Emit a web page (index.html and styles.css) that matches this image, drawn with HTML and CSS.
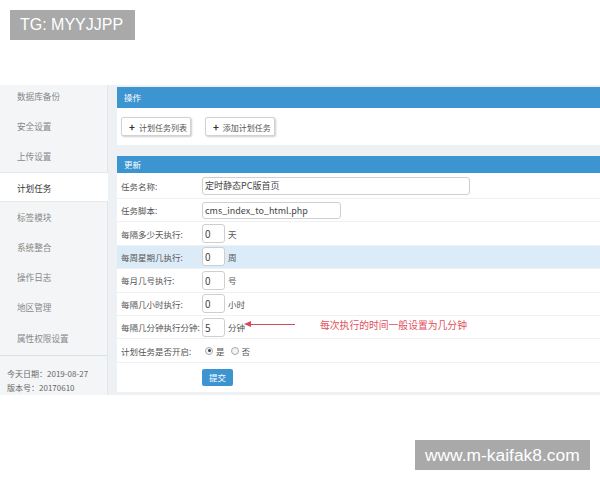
FILE: index.html
```html
<!DOCTYPE html>
<html>
  <head>
    <title>计划任务</title>
    <link rel="stylesheet" href="styles.css">
  </head>

  <body>
    <div class="tag tag-top">TG: MYYJJPP</div>

    <div class="screen">
      <!-- Sidebar -->
      <div class="sidebar">
        <ul class="menu">
          <li>数据库备份</li>
          <li>安全设置</li>
          <li>上传设置</li>
          <li class="active">计划任务</li>
          <li>标签模块</li>
          <li>系统整合</li>
          <li>操作日志</li>
          <li>地区管理</li>
          <li>属性权限设置</li>
        </ul>
        <div class="info">
          <p>今天日期：2019-08-27</p>
          <p>版本号：20170610</p>
        </div>
      </div>

      <!-- Main -->
      <div class="main">
        <div class="panel">
          <div class="panel-head tall">操作</div>
          <div class="panel-body actions">
            <button class="btn"><b>+</b>计划任务列表</button>
            <button class="btn"><b>+</b>添加计划任务</button>
          </div>
        </div>

        <div class="panel">
          <div class="panel-head">更新</div>
          <div class="form">
            <div class="row first">
              <span class="label">任务名称:</span>
              <input class="field wide" value="定时静态PC版首页">
            </div>
            <div class="row">
              <span class="label">任务脚本:</span>
              <input class="field mid" value="cms_index_to_html.php">
            </div>
            <div class="row">
              <span class="label">每隔多少天执行:</span>
              <input class="field small" value="0"><span class="unit">天</span>
            </div>
            <div class="row hl">
              <span class="label">每周星期几执行:</span>
              <input class="field small" value="0"><span class="unit">周</span>
            </div>
            <div class="row">
              <span class="label">每月几号执行:</span>
              <input class="field small" value="0"><span class="unit">号</span>
            </div>
            <div class="row">
              <span class="label">每隔几小时执行:</span>
              <input class="field small" value="0"><span class="unit">小时</span>
            </div>
            <div class="row">
              <span class="label">每隔几分钟执行分钟:</span>
              <input class="field small" value="5"><span class="unit">分钟</span>
              <div class="note">
                <span class="arrow"></span>
                <span class="note-text">每次执行的时间一般设置为几分钟</span>
              </div>
            </div>
            <div class="row">
              <span class="label">计划任务是否开启:</span>
              <span class="radio on"></span><span class="opt">是</span>
              <span class="radio"></span><span class="opt">否</span>
            </div>
            <div class="row submit-row">
              <span class="label"></span>
              <button class="submit">提交</button>
            </div>
          </div>
        </div>
      </div>
    </div>

    <div class="tag tag-bottom">www.m-kaifak8.com</div>
  </body>
</html>
```

FILE: styles.css
```css
* {
  margin: 0;
  padding: 0;
  box-sizing: border-box;
  font-family: 'Noto Sans CJK SC', 'Liberation Sans', sans-serif;
}

body {
  background: #fff;
  width: 600px;
  overflow: hidden;
}

.tag {
  display: inline-block;
  background: #a9a9a9;
  color: #fff;
  font-family: 'Liberation Sans', sans-serif;
  font-size: 16px;
  height: 30px;
  line-height: 30px;
}

.tag-top {
  margin: 10px 0 0 10px;
  width: 125px;
  padding-left: 10px;
}

.tag-bottom {
  display: block;
  margin: 45px 0 0 415px;
  width: 175px;
  padding-left: 10px;
  font-size: 17.4px;
}

.screen {
  display: flex;
  margin-top: 45px;
  height: 310px;
  overflow: hidden;
  background: #eef1f4;
}

/* Sidebar */
.sidebar {
  width: 108px;
  background: #f3f5f6;
  border-right: 1px solid #e3e6e9;
  flex-shrink: 0;
}

.menu {
  list-style: none;
  margin-top: -4px;
}

.menu li {
  height: 30.2px;
  line-height: 30px;
  padding-left: 17px;
  font-size: 8.6px;
  color: #888;
}

.menu li.active {
  background: #fff;
  color: #333;
  border-top: 1px solid #e6e8ea;
  border-bottom: 1px solid #e6e8ea;
  margin-right: -1px;
}

.info {
  border-top: 1px solid #dde1e4;
  margin-top: 2px;
  padding: 11px 0 0 7px;
}

.info p {
  font-size: 8px;
  color: #666;
  line-height: 14px;
}

/* Main */
.main {
  flex: 1;
  padding: 2px 0 0 9px;
}

.panel {
  background: #fff;
  margin-bottom: 11px;
}

.panel-head {
  background: #3c94d1;
  color: #fff;
  font-size: 8.5px;
  height: 17px;
  line-height: 17px;
  padding-left: 7px;
}

.panel-head.tall {
  height: 21px;
  line-height: 21px;
}

.actions {
  height: 37px;
  display: flex;
  align-items: center;
  gap: 14px;
  padding-left: 4px;
}

.btn {
  height: 19px;
  padding: 0 3px 0 7px;
  background: #fff;
  border: 1px solid #d2d2d2;
  border-radius: 2px;
  box-shadow: 1px 1px 2px rgba(0, 0, 0, 0.2);
  font-size: 8px;
  color: #555;
}

.btn b {
  margin-right: 4px;
  font-size: 10px;
  color: #333;
}

/* Form */
.row {
  display: flex;
  align-items: center;
  height: 23.4px;
  border-bottom: 1px solid #f0f1f2;
  position: relative;
}

.row.first {
  height: 26px;
}

.row.hl {
  background: #dcebf8;
}

.label {
  width: 85px;
  padding-left: 4px;
  font-size: 8.5px;
  color: #555;
  flex-shrink: 0;
}

.field {
  height: 18px;
  border: 1px solid #cfcfcf;
  border-radius: 3px;
  background: #fff;
  font-size: 9px;
  color: #444;
  padding-left: 2px;
}

.field.wide {
  width: 268px;
}

.field.mid {
  width: 139px;
  height: 17px;
}

.field.small {
  width: 23px;
  height: 19px;
  font-size: 10px;
}

.unit {
  margin-left: 3px;
  font-size: 8.5px;
  color: #555;
}

.note {
  position: absolute;
  left: 129px;
  top: 2px;
  display: flex;
  align-items: center;
}

.arrow {
  position: relative;
  width: 49px;
  height: 1px;
  background: #d9485a;
}

.arrow::before {
  content: "";
  position: absolute;
  left: -2px;
  top: -3px;
  border-right: 7px solid #d9485a;
  border-top: 3.5px solid transparent;
  border-bottom: 3.5px solid transparent;
}

.note-text {
  margin-left: 25px;
  font-size: 9.8px;
  color: #e0505e;
}

.radio {
  width: 8px;
  height: 8px;
  border-radius: 50%;
  border: 1px solid #aaa;
  background: #f4f4f4;
  margin-left: 3px;
  position: relative;
}

.radio.on::after {
  content: "";
  position: absolute;
  left: 1.5px;
  top: 1.5px;
  width: 3px;
  height: 3px;
  border-radius: 50%;
  background: #444;
}

.opt {
  margin: 0 3px 0 3px;
  font-size: 8.5px;
  color: #555;
}

.submit-row {
  height: 29px;
  border-bottom: none;
}

.submit {
  width: 31px;
  height: 17px;
  background: #3c94d1;
  color: #fff;
  border: none;
  border-radius: 2px;
  font-size: 8.5px;
}
```
